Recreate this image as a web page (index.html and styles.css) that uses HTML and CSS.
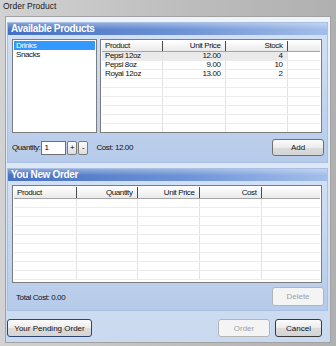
FILE: index.html
```html
<!DOCTYPE html>
<html lang="en">
<head>
    <meta charset="UTF-8">
    <title>Order Product</title>
    <link rel="stylesheet" href="styles.css">
</head>
<body>
<div class="window">
    <div class="titlebar">Order Product</div>

    <div class="client">
        <!-- Available products -->
        <section class="group">
            <div class="group-head">Available Products</div>
            <div class="group-body">
                <div class="browse">
                    <ul class="categories">
                        <li class="selected">Drinks</li>
                        <li>Snacks</li>
                    </ul>
                    <div class="grid">
                        <table class="products">
                            <colgroup>
                                <col style="width:60px"><col style="width:63px"><col style="width:62px"><col>
                            </colgroup>
                            <thead>
                                <tr><th>Product</th><th class="num">Unit Price</th><th class="num">Stock</th><th></th></tr>
                            </thead>
                            <tbody>
                                <tr class="current"><td>Pepsi 12oz</td><td class="num">12.00</td><td class="num">4</td><td class="fill"></td></tr>
                                <tr><td>Pepsi 8oz</td><td class="num">9.00</td><td class="num">10</td><td class="fill"></td></tr>
                                <tr><td>Royal 12oz</td><td class="num">13.00</td><td class="num">2</td><td class="fill"></td></tr>
                                <tr><td></td><td></td><td></td><td class="fill"></td></tr>
                                <tr><td></td><td></td><td></td><td class="fill"></td></tr>
                                <tr><td></td><td></td><td></td><td class="fill"></td></tr>
                                <tr><td></td><td></td><td></td><td class="fill"></td></tr>
                                <tr><td></td><td></td><td></td><td class="fill"></td></tr>
                                <tr><td></td><td></td><td></td><td class="fill"></td></tr>
                            </tbody>
                        </table>
                    </div>
                </div>

                <div class="action-row">
                    <span class="label">Quantity:</span>
                    <input class="qty" type="text" value="1">
                    <button class="step">+</button>
                    <button class="step">-</button>
                    <span class="cost">Cost: 12.00</span>
                    <button class="btn btn-add">Add</button>
                </div>
            </div>
        </section>

        <!-- Current order -->
        <section class="group group-order">
            <div class="group-head">You New Order</div>
            <div class="group-body">
                <div class="grid grid-order">
                    <table class="order">
                        <colgroup>
                            <col style="width:62px"><col style="width:61px"><col style="width:62px"><col style="width:62px"><col>
                        </colgroup>
                        <thead>
                            <tr><th>Product</th><th class="num">Quantity</th><th class="num">Unit Price</th><th class="num">Cost</th><th></th></tr>
                        </thead>
                        <tbody>
                            <tr><td></td><td></td><td></td><td></td><td class="fill"></td></tr>
                            <tr><td></td><td></td><td></td><td></td><td class="fill"></td></tr>
                            <tr><td></td><td></td><td></td><td></td><td class="fill"></td></tr>
                            <tr><td></td><td></td><td></td><td></td><td class="fill"></td></tr>
                            <tr><td></td><td></td><td></td><td></td><td class="fill"></td></tr>
                            <tr><td></td><td></td><td></td><td></td><td class="fill"></td></tr>
                            <tr><td></td><td></td><td></td><td></td><td class="fill"></td></tr>
                            <tr><td></td><td></td><td></td><td></td><td class="fill"></td></tr>
                            <tr><td></td><td></td><td></td><td></td><td class="fill"></td></tr>
                        </tbody>
                    </table>
                </div>

                <div class="action-row total-row">
                    <span class="total">Total Cost: 0.00</span>
                    <button class="btn btn-delete" disabled>Delete</button>
                </div>
            </div>
        </section>

        <div class="footer">
            <button class="btn btn-pending">Your Pending Order</button>
            <span class="spacer"></span>
            <button class="btn btn-order" disabled>Order</button>
            <button class="btn btn-cancel">Cancel</button>
        </div>
    </div>
</div>
</body>
</html>
```
FILE: styles.css
```css
body {
    margin: 0;
    width: 336px;
    height: 346px;
    overflow: hidden;
    font-family: "Liberation Sans", Arial, sans-serif;
    font-size: 8px;
    letter-spacing: -0.4px;
    color: #111;
    background: #c4c4c4;
}

.window {
    height: 346px;
    display: flex;
    flex-direction: column;
    background: linear-gradient(to right, #d2d2d2, #bdbdbd 55%, #b0b0b0);
}

.titlebar {
    height: 16px;
    padding-left: 3px;
    line-height: 13px;
    font-size: 8.5px;
    letter-spacing: 0;
    color: #1a1a1a;
}

.client {
    flex: 1;
    margin: 0 5px 3px 5px;
    border: 1px solid #a2a2a2;
    background: linear-gradient(#eef3fa, #c9d9ef);
    padding: 5px 2px 0 1px;
    display: flex;
    flex-direction: column;
}

/* Group boxes */
.group {
    border: 1px solid #a9c0e2;
    background: linear-gradient(#d4e2f5, #b6cbea);
}
.group-order {
    margin-top: 5px;
}
.group-head {
    height: 12px;
    line-height: 12px;
    padding-left: 3px;
    font-size: 10px;
    font-weight: bold;
    letter-spacing: -0.35px;
    color: #fff;
    background:
        linear-gradient(rgba(255, 255, 255, 0.35), rgba(255, 255, 255, 0) 55%),
        linear-gradient(to right, #4670c1, #6d93d6 55%, #a3bee9);
}
.group-body {
    padding: 4px 5px 6px 4px;
}
.group-order .group-body {
    padding-bottom: 4px;
}

.browse {
    display: flex;
    gap: 3px;
    height: 94px;
}

.categories {
    width: 85px;
    margin: 0;
    padding: 1px 0 0 0;
    list-style: none;
    background: #fff;
    border: 1px solid #7c7c7c;
    box-sizing: border-box;
}
.categories li {
    height: 9px;
    line-height: 9px;
    padding-left: 2px;
    margin: 0 1px;
}
.categories li.selected {
    background: #3399ff;
    color: #fff;
}

/* Data grids */
.grid {
    flex: 1;
    background: #fff;
    border: 1px solid #7c7c7c;
    padding: 1px;
    overflow: hidden;
}
.grid-order {
    height: 94px;
}
.grid table {
    width: 100%;
    table-layout: fixed;
    border-collapse: collapse;
}
.grid th {
    height: 10px;
    padding: 0 3px;
    font-weight: normal;
    text-align: left;
    line-height: 10px;
    background: linear-gradient(#ffffff, #e9e9e9);
    border-right: 1px solid #4a4a4a;
    border-bottom: 1px solid #a5a5a5;
}
.grid th:last-child {
    border-right: none;
}
.grid-order th {
    height: 11px;
}
.grid td {
    height: 8px;
    padding: 0 3px;
    line-height: 8px;
    border-right: 1px solid #e3e3e3;
    border-bottom: 1px solid #ececec;
    white-space: nowrap;
}
.grid td.fill {
    border-right: none;
}
.grid .num {
    text-align: right;
    padding-right: 4px;
}
.products tr.current td {
    background: #eaeaea;
}
.products tr.current td.fill {
    background: #fff;
}

/* Rows under the grids */
.action-row {
    display: flex;
    align-items: center;
    margin-top: 6px;
    margin-right: -2px;
    height: 17px;
}
.total-row {
    margin-top: 4px;
    height: 19px;
}
.label {
    margin-left: 0;
}
.qty {
    width: 25px;
    height: 14px;
    margin-left: 1px;
    padding: 0 2px;
    box-sizing: border-box;
    border: 1px solid #6f6f6f;
    font: inherit;
    letter-spacing: 0;
    background: #fff;
}
.step {
    width: 10px;
    height: 14px;
    margin-left: 1px;
    padding: 0;
    font: inherit;
    font-size: 8px;
    letter-spacing: 0;
    line-height: 10px;
    border: 1px solid #7a7a7a;
    border-radius: 2px;
    background: linear-gradient(#fdfdfd, #dcdcdc);
}
.cost {
    margin-left: 8px;
}
.total {
    margin-left: 4px;
    margin-top: 1px;
}

/* Buttons */
.btn {
    height: 100%;
    margin-left: auto;
    padding: 0;
    font: inherit;
    font-size: 8px;
    color: #111;
    border: 1px solid #707070;
    border-radius: 3px;
    background: linear-gradient(#fbfbfb, #ececec 50%, #dcdcdc 51%, #d4d4d4);
}
.btn-add,
.btn-delete {
    width: 52px;
}
.btn[disabled] {
    color: #a0a0a0;
    border-color: #b4b4b4;
    background: #f4f4f4;
}

.footer {
    display: flex;
    align-items: center;
    height: 18px;
    margin-top: 8px;
    padding-right: 6px;
}
.footer .btn {
    margin-left: 0;
}
.btn-pending {
    width: 85px;
    margin-left: 1px;
    border-color: #2c4670;
}
.spacer {
    flex: 1;
}
.btn-order {
    width: 52px;
}
.btn-cancel {
    width: 47px;
    margin-left: 5px !important;
    border-color: #3a3a3a;
}
```
